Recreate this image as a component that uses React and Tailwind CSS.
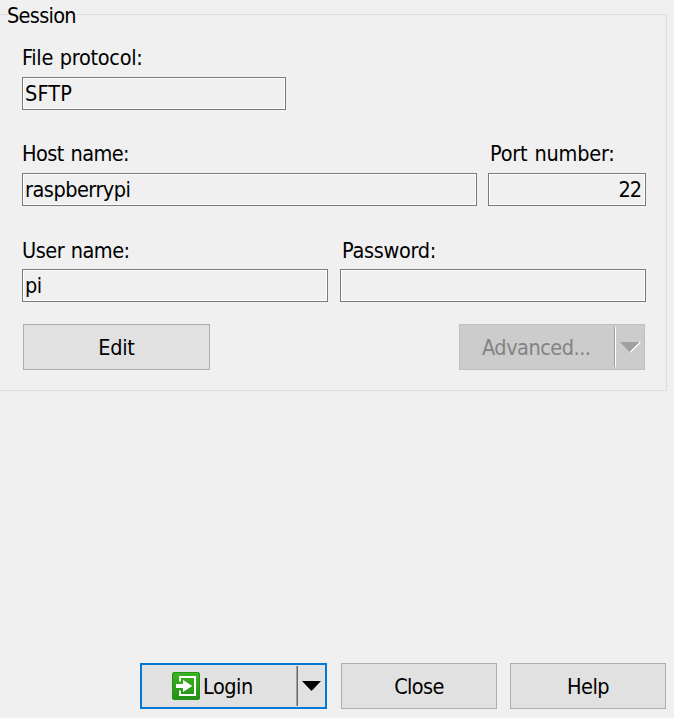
function Label({ children, className = '' }) {
  return <div className={`flex h-[28px] items-center pt-[2px] whitespace-pre [word-spacing:1px] ${className}`}>{children}</div>;
}

function Field({ value = '', className = '', textClass = '' }) {
  return (
    <div className={`flex h-[33px] items-center border border-[#7a7a7a] bg-[#f0f0f0] px-[2px] shadow-[inset_0_0_0_1px_#ffffff] ${className}`}>
      <span className={textClass}>{value}</span>
    </div>
  );
}

function Button({ children, className = '' }) {
  return (
    <button className={`flex h-[46px] items-center justify-center border border-[#adadad] bg-[#e1e1e1] pt-[2px] ${className}`}>
      {children}
    </button>
  );
}

function LoginIcon() {
  return (
    <svg width="28" height="28" viewBox="0 0 28 28" className="shrink-0">
      <defs>
        <linearGradient id="loginGreen" x1="0" y1="0" x2="0" y2="1">
          <stop offset="0" stopColor="#3bb321" />
          <stop offset="1" stopColor="#259016" />
        </linearGradient>
      </defs>
      <rect x="0.5" y="0.5" width="27" height="27" rx="1.5" fill="url(#loginGreen)" stroke="#24911a" />
      <path d="M8 9.5V5H23V23H8V18.5" fill="none" stroke="#fff" strokeWidth="2" />
      <path d="M4 12H11V8L20.3 14L11 20V16H4Z" fill="#fff" />
    </svg>
  );
}

export default function App() {
  return (
    <div className="flex h-[718px] w-[674px] flex-col overflow-hidden bg-[#f0f0f0] font-['DejaVu_Sans_Condensed','DejaVu_Sans',sans-serif] text-[21.5px] leading-[28px] text-black">
      <div className="h-[14px]" />
      <fieldset className="h-[377px] w-[667px] border-y border-r border-[#dcdcdc] pl-[22px]">
        <div className="-mt-[13px] -ml-[15px] h-[28px] w-[70px] bg-[#f0f0f0]">
          <span className="tracking-[-0.7px]">Session</span>
        </div>
        <div className="mt-[13px]">
          <Label className="tracking-[-0.3px]">File protocol:</Label>
          <Field value="SFTP" className="mt-[6px] w-[264px]" textClass="tracking-[0.1px]" />
        </div>
        <div className="mt-[29px] flex gap-[11px]">
          <div>
            <Label className="tracking-[-0.55px]">Host name:</Label>
            <Field value="raspberrypi" className="mt-[6px] w-[455px]" textClass="tracking-[-0.5px]" />
          </div>
          <div>
            <Label className="pl-[2px] tracking-[-0.2px]">Port number:</Label>
            <Field value="22" className="mt-[6px] w-[158px] justify-end" textClass="pr-[2px] tracking-[-1px]" />
          </div>
        </div>
        <div className="mt-[30px] flex gap-[12px]">
          <div>
            <Label className="tracking-[-0.5px]">User name:</Label>
            <Field value="pi" className="mt-[5px] w-[306px]" textClass="tracking-[-0.5px]" />
          </div>
          <div>
            <Label className="pl-[2px] tracking-[-0.3px]">Password:</Label>
            <Field className="mt-[5px] w-[306px]" />
          </div>
        </div>
        <div className="mt-[22px] flex w-[623px] justify-between pl-px">
          <Button className="w-[187px]"><span className="tracking-[-0.3px]">Edit</span></Button>
          <div className="flex h-[46px] w-[186px] items-center border border-[#bfbfbf] bg-[#cccccc] text-[#838383]">
            <span className="w-[154px] pt-[2px] pl-[22px] text-left tracking-[-0.5px]">Advanced...</span>
            <span className="h-[40px] w-[2px] border-r border-l border-r-white border-l-[#a0a0a0]" />
            <svg width="28" height="14" viewBox="0 0 28 14" className="shrink-0">
              <path d="M24 2L14 12" stroke="#fff" strokeWidth="2" />
              <path d="M4 2H23.5L13.5 12Z" fill="#a0a0a0" />
            </svg>
          </div>
        </div>
      </fieldset>
      <div className="mt-auto mb-[9px] flex pl-[140px]">
        <button className="flex h-[46px] w-[187px] items-center border-2 border-[#0078d7] bg-[#e1e1e1]">
          <span className="flex w-[154px] items-center gap-[3px] pl-[30px]">
            <LoginIcon />
            <span className="pt-[2px] tracking-[-0.5px]">Login</span>
          </span>
          <span className="h-[40px] w-[2px] border-r border-l border-r-[#696969] border-l-[#a0a0a0]" />
          <svg width="27" height="14" viewBox="0 0 27 14" className="shrink-0">
            <path d="M4 2H23L13.5 12Z" fill="#000" />
          </svg>
        </button>
        <Button className="ml-[14px] w-[156px]"><span className="tracking-[-0.6px]">Close</span></Button>
        <Button className="ml-[13px] w-[156px]"><span className="tracking-[-0.5px]">Help</span></Button>
      </div>
    </div>
  );
}
